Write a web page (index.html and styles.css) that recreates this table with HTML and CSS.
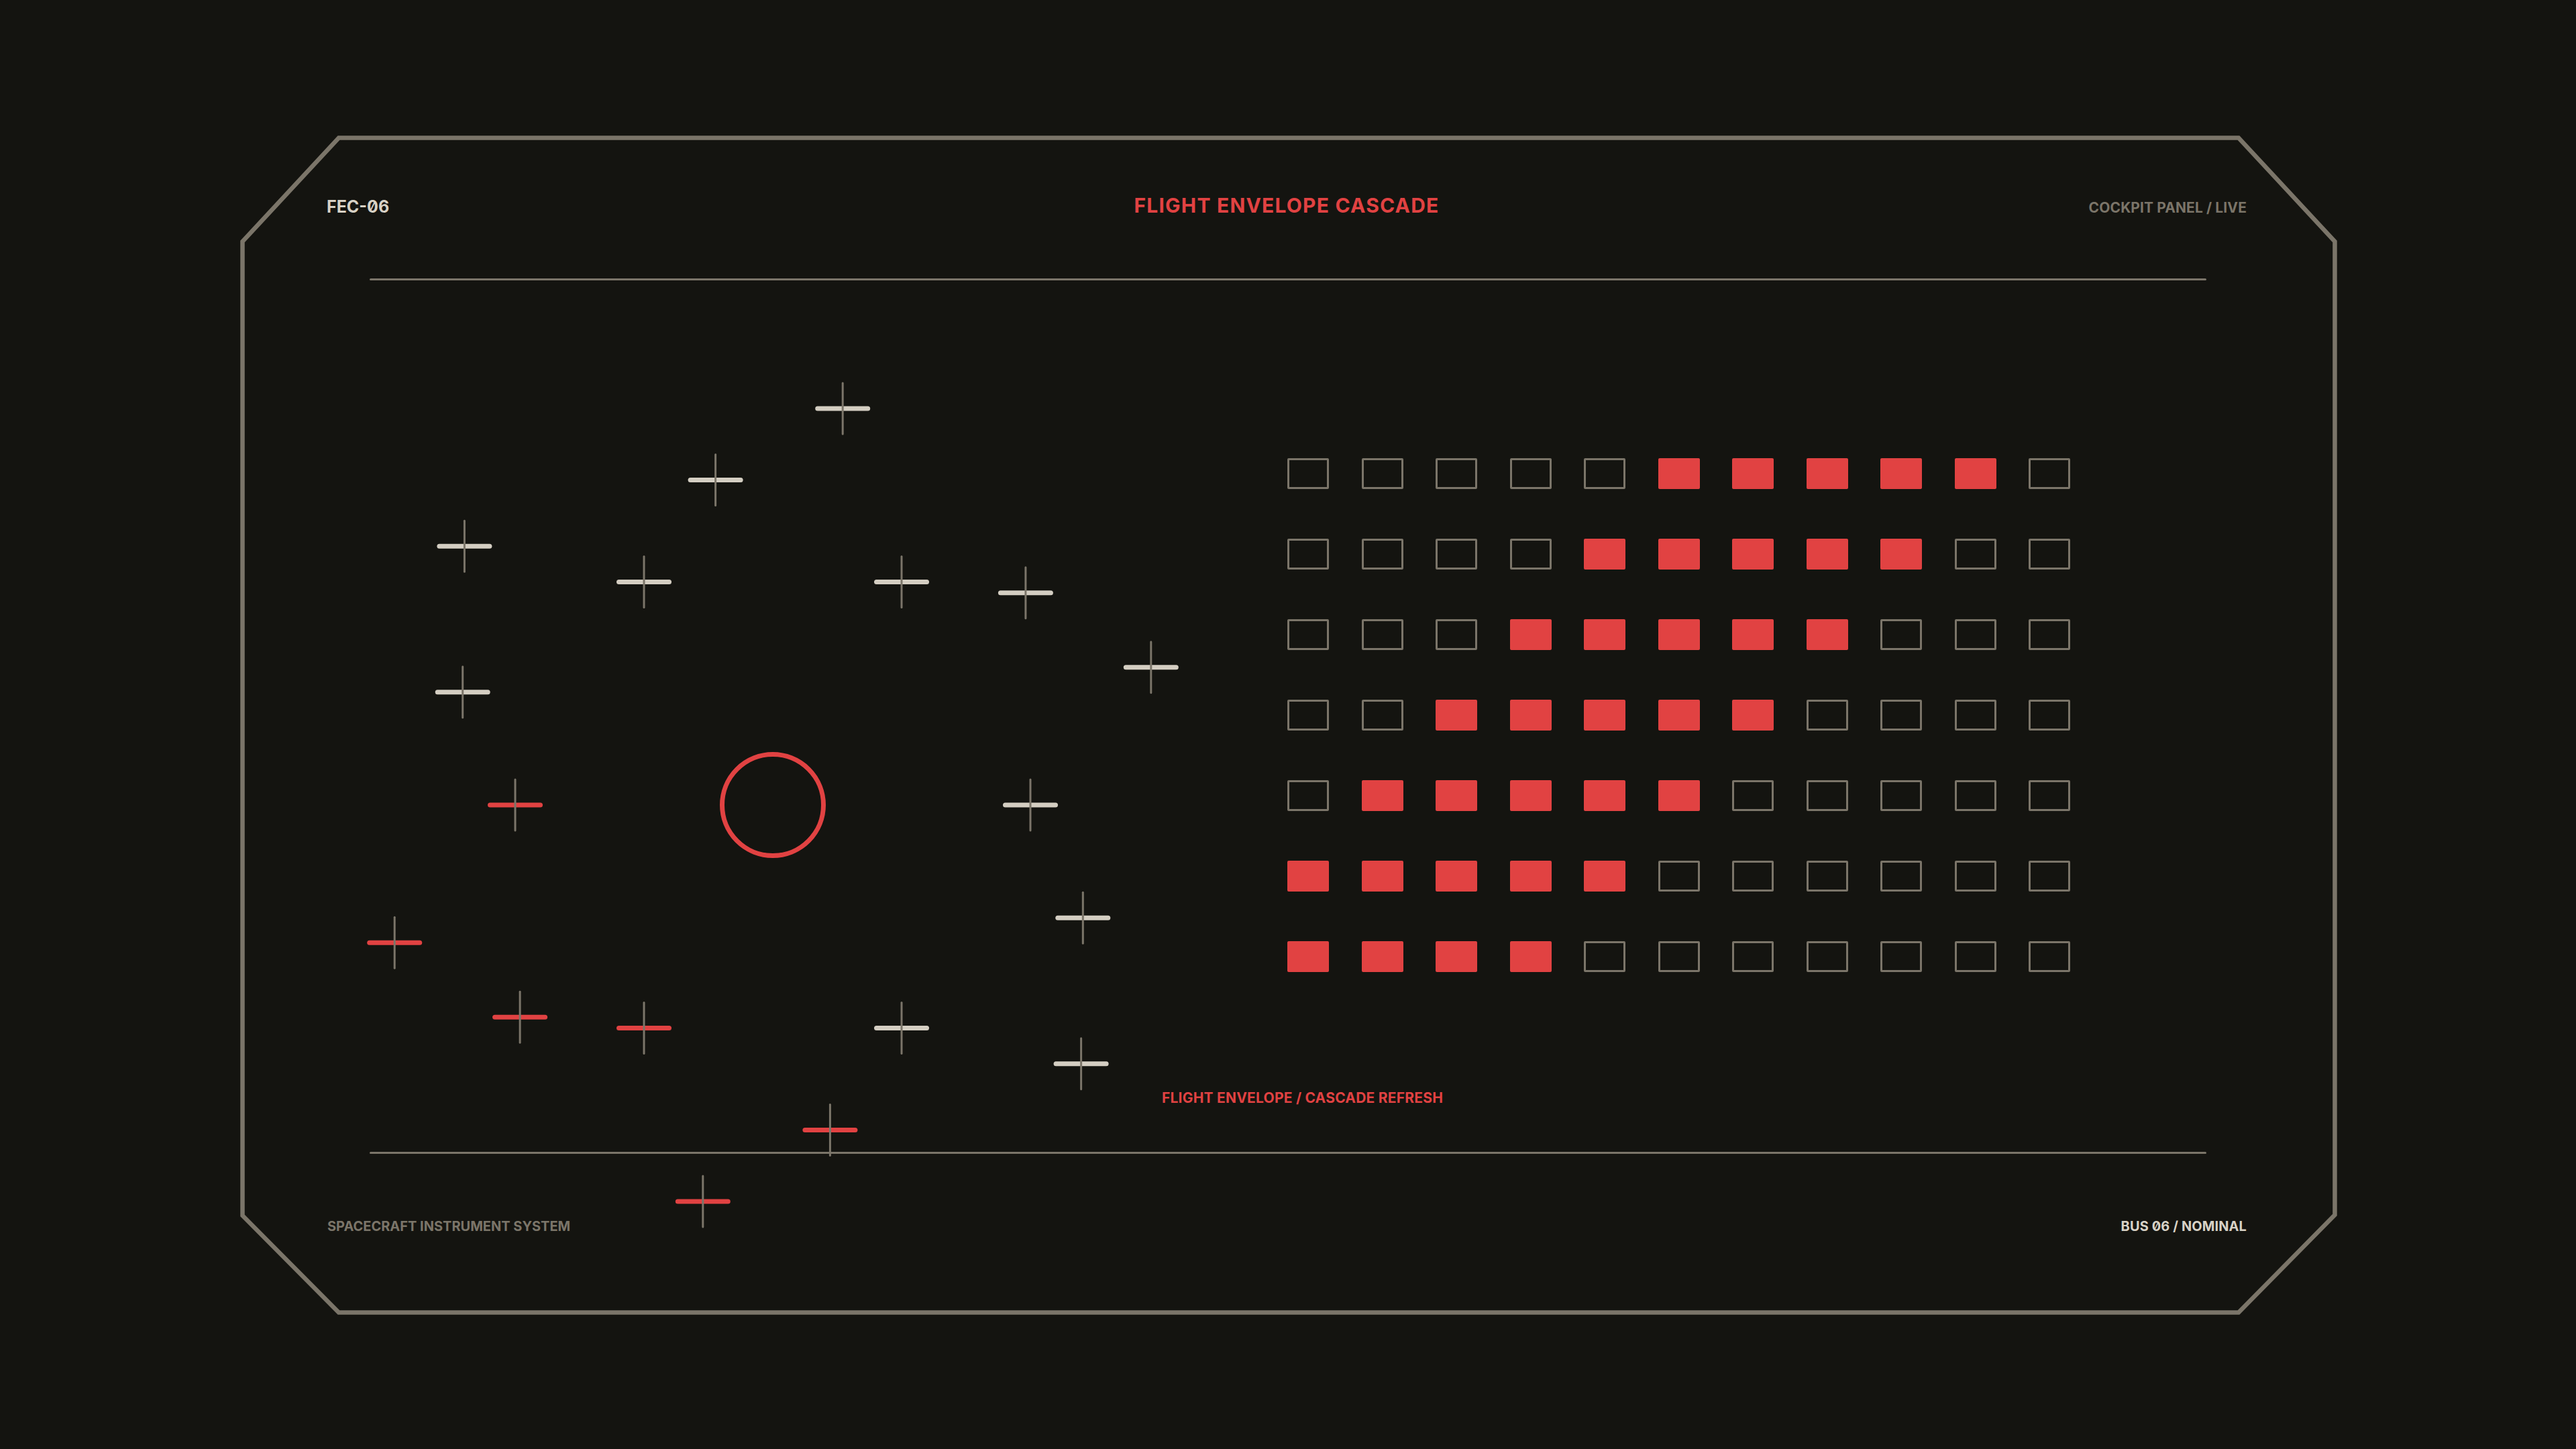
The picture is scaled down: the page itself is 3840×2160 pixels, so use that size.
FILE: index.html
```html
<!DOCTYPE html>
<html lang="en">
<head>
<meta charset="utf-8">
<title>Flight Envelope Cascade</title>
<link rel="stylesheet" href="styles.css">
</head>
<body>
<div class="panel">
  <svg class="frame" viewBox="0 0 3126 1758" width="3126" height="1758" aria-hidden="true">
    <polygon points="147,3.5 2979,3.5 3122.5,158 3122.5,1609 2979,1754.5 147,1754.5 3.5,1610 3.5,158"/>
  </svg>
  <header class="header">
    <span class="id">FEC-06</span>
    <h1 class="title">FLIGHT ENVELOPE CASCADE</h1>
    <span class="mode">COCKPIT PANEL / LIVE</span>
  </header>
  <div class="rule"></div>
  <main class="main">
    <div class="main-row">
      <div class="plot">
        <svg class="plot-svg" viewBox="358 418 1561 1299" width="1561" height="1299" aria-hidden="true">
          <circle class="target" cx="1152" cy="1200" r="75.5"/>
          <g class="xh w" transform="translate(1536 1200)"><line class="bar" x1="-37.5" y1="0" x2="37.5" y2="0"/><line class="stem" x1="0" y1="-38" x2="0" y2="38"/></g>
          <g class="xh w" transform="translate(1344 1532.6)"><line class="bar" x1="-37.5" y1="0" x2="37.5" y2="0"/><line class="stem" x1="0" y1="-38" x2="0" y2="38"/></g>
          <g class="xh r" transform="translate(960 1532.6)"><line class="bar" x1="-37.5" y1="0" x2="37.5" y2="0"/><line class="stem" x1="0" y1="-38" x2="0" y2="38"/></g>
          <g class="xh r" transform="translate(768 1200)"><line class="bar" x1="-37.5" y1="0" x2="37.5" y2="0"/><line class="stem" x1="0" y1="-38" x2="0" y2="38"/></g>
          <g class="xh w" transform="translate(960 867.4)"><line class="bar" x1="-37.5" y1="0" x2="37.5" y2="0"/><line class="stem" x1="0" y1="-38" x2="0" y2="38"/></g>
          <g class="xh w" transform="translate(1344 867.4)"><line class="bar" x1="-37.5" y1="0" x2="37.5" y2="0"/><line class="stem" x1="0" y1="-38" x2="0" y2="38"/></g>

          <g class="xh w" transform="translate(1614.3 1368.3)"><line class="bar" x1="-37.5" y1="0" x2="37.5" y2="0"/><line class="stem" x1="0" y1="-38" x2="0" y2="38"/></g>
          <g class="xh r" transform="translate(1237.4 1684.5)"><line class="bar" x1="-37.5" y1="0" x2="37.5" y2="0"/><line class="stem" x1="0" y1="-38" x2="0" y2="38"/></g>
          <g class="xh r" transform="translate(775.1 1516.2)"><line class="bar" x1="-37.5" y1="0" x2="37.5" y2="0"/><line class="stem" x1="0" y1="-38" x2="0" y2="38"/></g>
          <g class="xh w" transform="translate(689.7 1031.7)"><line class="bar" x1="-37.5" y1="0" x2="37.5" y2="0"/><line class="stem" x1="0" y1="-38" x2="0" y2="38"/></g>
          <g class="xh w" transform="translate(1066.6 715.5)"><line class="bar" x1="-37.5" y1="0" x2="37.5" y2="0"/><line class="stem" x1="0" y1="-38" x2="0" y2="38"/></g>
          <g class="xh w" transform="translate(1528.9 883.8)"><line class="bar" x1="-37.5" y1="0" x2="37.5" y2="0"/><line class="stem" x1="0" y1="-38" x2="0" y2="38"/></g>

          <g class="xh w" transform="translate(1611.6 1585.7)"><line class="bar" x1="-37.5" y1="0" x2="37.5" y2="0"/><line class="stem" x1="0" y1="-38" x2="0" y2="38"/></g>
          <g class="xh r" transform="translate(1047.8 1790.9)"><line class="bar" x1="-37.5" y1="0" x2="37.5" y2="0"/><line class="stem" x1="0" y1="-38" x2="0" y2="38"/></g>
          <g class="xh r" transform="translate(588.2 1405.2)"><line class="bar" x1="-37.5" y1="0" x2="37.5" y2="0"/><line class="stem" x1="0" y1="-38" x2="0" y2="38"/></g>
          <g class="xh w" transform="translate(692.4 814.3)"><line class="bar" x1="-37.5" y1="0" x2="37.5" y2="0"/><line class="stem" x1="0" y1="-38" x2="0" y2="38"/></g>
          <g class="xh w" transform="translate(1256.2 609.1)"><line class="bar" x1="-37.5" y1="0" x2="37.5" y2="0"/><line class="stem" x1="0" y1="-38" x2="0" y2="38"/></g>
          <g class="xh w" transform="translate(1715.8 994.8)"><line class="bar" x1="-37.5" y1="0" x2="37.5" y2="0"/><line class="stem" x1="0" y1="-38" x2="0" y2="38"/></g>
        </svg>
      </div>
      <div class="cells">
        <span class="cell"></span><span class="cell"></span><span class="cell"></span><span class="cell"></span><span class="cell"></span><span class="cell on"></span><span class="cell on"></span><span class="cell on"></span><span class="cell on"></span><span class="cell on"></span><span class="cell"></span>
        <span class="cell"></span><span class="cell"></span><span class="cell"></span><span class="cell"></span><span class="cell on"></span><span class="cell on"></span><span class="cell on"></span><span class="cell on"></span><span class="cell on"></span><span class="cell"></span><span class="cell"></span>
        <span class="cell"></span><span class="cell"></span><span class="cell"></span><span class="cell on"></span><span class="cell on"></span><span class="cell on"></span><span class="cell on"></span><span class="cell on"></span><span class="cell"></span><span class="cell"></span><span class="cell"></span>
        <span class="cell"></span><span class="cell"></span><span class="cell on"></span><span class="cell on"></span><span class="cell on"></span><span class="cell on"></span><span class="cell on"></span><span class="cell"></span><span class="cell"></span><span class="cell"></span><span class="cell"></span>
        <span class="cell"></span><span class="cell on"></span><span class="cell on"></span><span class="cell on"></span><span class="cell on"></span><span class="cell on"></span><span class="cell"></span><span class="cell"></span><span class="cell"></span><span class="cell"></span><span class="cell"></span>
        <span class="cell on"></span><span class="cell on"></span><span class="cell on"></span><span class="cell on"></span><span class="cell on"></span><span class="cell"></span><span class="cell"></span><span class="cell"></span><span class="cell"></span><span class="cell"></span><span class="cell"></span>
        <span class="cell on"></span><span class="cell on"></span><span class="cell on"></span><span class="cell on"></span><span class="cell"></span><span class="cell"></span><span class="cell"></span><span class="cell"></span><span class="cell"></span><span class="cell"></span><span class="cell"></span>
      </div>
    </div>
    <p class="caption">FLIGHT ENVELOPE / CASCADE REFRESH</p>
  </main>
  <div class="rule"></div>
  <footer class="footer">
    <span class="system">SPACECRAFT INSTRUMENT SYSTEM</span>
    <span class="bus">BUS 06 / NOMINAL</span>
  </footer>
</div>
</body>
</html>
```

FILE: styles.css
```css
html, body {
  margin: 0;
  padding: 0;
}

body {
  width: 3840px;
  height: 2160px;
  overflow: hidden;
  background: #141410;
  font-family: "Inter", "Liberation Sans", sans-serif;
  font-feature-settings: "zero" 1;
  box-sizing: border-box;
  padding: 202px 0 0 358px;
}

.panel {
  position: relative;
  width: 3126px;
  height: 1758px;
}

.frame {
  position: absolute;
  left: 0;
  top: 0;
  overflow: visible;
}

.frame polygon {
  fill: none;
  stroke: #7b7569;
  stroke-width: 6.5;
  stroke-linejoin: miter;
}

.header {
  position: relative;
  display: grid;
  grid-template-columns: 1fr auto 1fr;
  align-items: baseline;
  padding: 89px 135px 0 129px;
}

.id {
  font-size: 25px;
  line-height: 1;
  font-weight: 700;
  color: #d8d2c6;
  letter-spacing: 0;
}

.title {
  margin: 0;
  font-size: 30px;
  line-height: 1;
  font-weight: 700;
  color: #e14242;
  letter-spacing: 0.04em;
}

.mode {
  justify-self: end;
  font-size: 21px;
  line-height: 1;
  font-weight: 700;
  color: #7b7569;
  letter-spacing: 0.005em;
}

.rule {
  position: relative;
  height: 3px;
  margin: 94px 195px 0 193px;
  background: #7b7569;
  border-radius: 2px;
}

.main {
  position: relative;
  height: 1299px;
  display: flex;
  flex-direction: column;
}

.main + .rule {
  margin-top: 0;
}

.main-row {
  display: flex;
}

.plot {
  position: relative;
  flex: none;
  width: 1561px;
}

.plot-svg {
  position: absolute;
  left: 0;
  top: 0;
  overflow: visible;
}

.target {
  fill: none;
  stroke: #e14242;
  stroke-width: 7;
}

.xh .bar {
  stroke-width: 7;
  stroke-linecap: round;
}

.xh.w .bar {
  stroke: #d4cec2;
}

.xh.r .bar {
  stroke: #e14242;
}

.xh .stem {
  stroke: #7b7569;
  stroke-width: 3;
  stroke-linecap: round;
}

.cells {
  margin-top: 265px;
  display: grid;
  grid-template-columns: repeat(11, 62px);
  grid-auto-rows: 46px;
  column-gap: 48.5px;
  row-gap: 74px;
}

.cell {
  box-sizing: border-box;
  border: 3px solid #7b7569;
  border-radius: 2px;
}

.cell.on {
  background: #e14242;
  border-color: #e14242;
}

.caption {
  margin: 177px 0 0 1374px;
  font-size: 21px;
  line-height: 1;
  font-weight: 700;
  color: #e14242;
  letter-spacing: 0.01em;
}

.footer {
  position: relative;
  display: flex;
  justify-content: space-between;
  align-items: baseline;
  padding: 98px 135px 0 130px;
}

.system {
  font-size: 20px;
  line-height: 1;
  font-weight: 700;
  color: #7b7569;
  letter-spacing: 0;
}

.bus {
  font-size: 20px;
  line-height: 1;
  font-weight: 700;
  color: #d8d2c6;
  letter-spacing: 0.005em;
}
```
